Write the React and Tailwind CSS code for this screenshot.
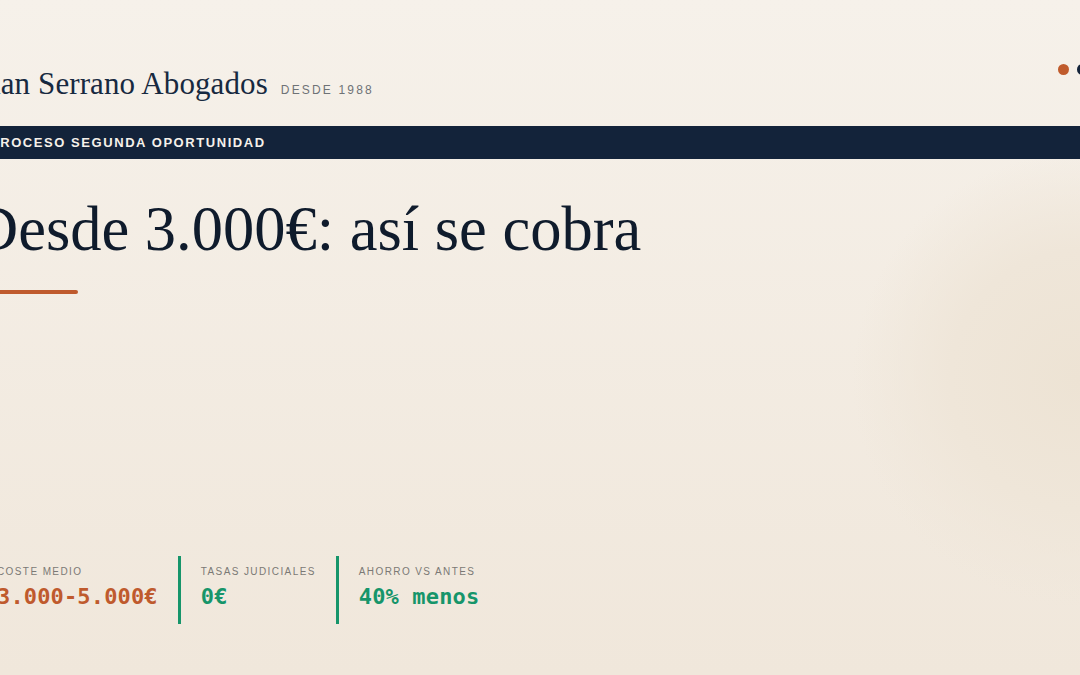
const stats = [
  { label: "Coste medio", value: "3.000-5.000€", tone: "text-[#bf5a2d]" },
  { label: "Tasas judiciales", value: "0€", tone: "text-[#16956a]" },
  { label: "Ahorro vs antes", value: "40% menos", tone: "text-[#16956a]" },
];

function Dots() {
  return (
    <div className="flex gap-2">
      <span className="h-[11px] w-[11px] rounded-full bg-[#c05b2c]" />
      <span className="h-[11px] w-[11px] rounded-full bg-[#13233a]" />
      <span className="h-[11px] w-[11px] rounded-full bg-[#16956a]" />
    </div>
  );
}

export default function App() {
  return (
    <div className="relative h-[675px] w-full overflow-hidden bg-gradient-to-b from-[#f6f1ea] to-[#f0e7db]">
      {/* warm glow on the right edge */}
      <div className="pointer-events-none absolute left-[850px] top-[150px] h-[460px] w-[460px] rounded-full bg-[radial-gradient(circle,#ede3d4_0%,#efe6d9_40%,transparent_70%)]" />

      <div className="relative -mx-[27px] flex h-full flex-col pb-[51px]">
        <header className="flex items-start justify-between pt-[64px]">
          <div className="mt-1 flex items-baseline gap-[13px]">
            <span className="font-['Liberation_Serif',serif] text-[31px] leading-none tracking-[0.1px] text-[#172940]">
              Juan Serrano Abogados
            </span>
            <span className="font-['Liberation_Sans',sans-serif] text-[12px] leading-none tracking-[0.18em] text-[#6e7276]">
              DESDE 1988
            </span>
          </div>
          <Dots />
        </header>

        <div className="mt-[27px] flex h-[33px] items-center bg-[#13233a] px-[17px]">
          <span className="font-['Liberation_Sans',sans-serif] text-[13px] font-bold uppercase leading-none tracking-[0.12em] text-[#f6f1ea]">
            Proceso segunda oportunidad
          </span>
        </div>

        <h1 className="mt-[39px] font-['Liberation_Serif',serif] text-[62.5px] leading-none text-[#0f1b2c]">
          Desde 3.000€: así se cobra
        </h1>
        <div className="mt-[29px] h-1 w-[105px] rounded-full bg-[#bf5a2d]" />

        <div className="mt-auto flex gap-5 pl-6">
          {stats.map((s, i) => (
            <div
              key={s.label}
              className={`h-[68px] pt-[11px] ${i > 0 ? "border-l-[3px] border-[#16956a] pl-5" : ""}`}
            >
              <div className="font-['Liberation_Sans',sans-serif] text-[10px] uppercase leading-none tracking-[0.14em] text-[#7b7975]">
                {s.label}
              </div>
              <div
                className={`mt-[9px] font-['DejaVu_Sans_Mono',monospace] text-[22px] font-bold leading-none tracking-[0.15px] ${s.tone}`}
              >
                {s.value}
              </div>
            </div>
          ))}
        </div>
      </div>
    </div>
  );
}
